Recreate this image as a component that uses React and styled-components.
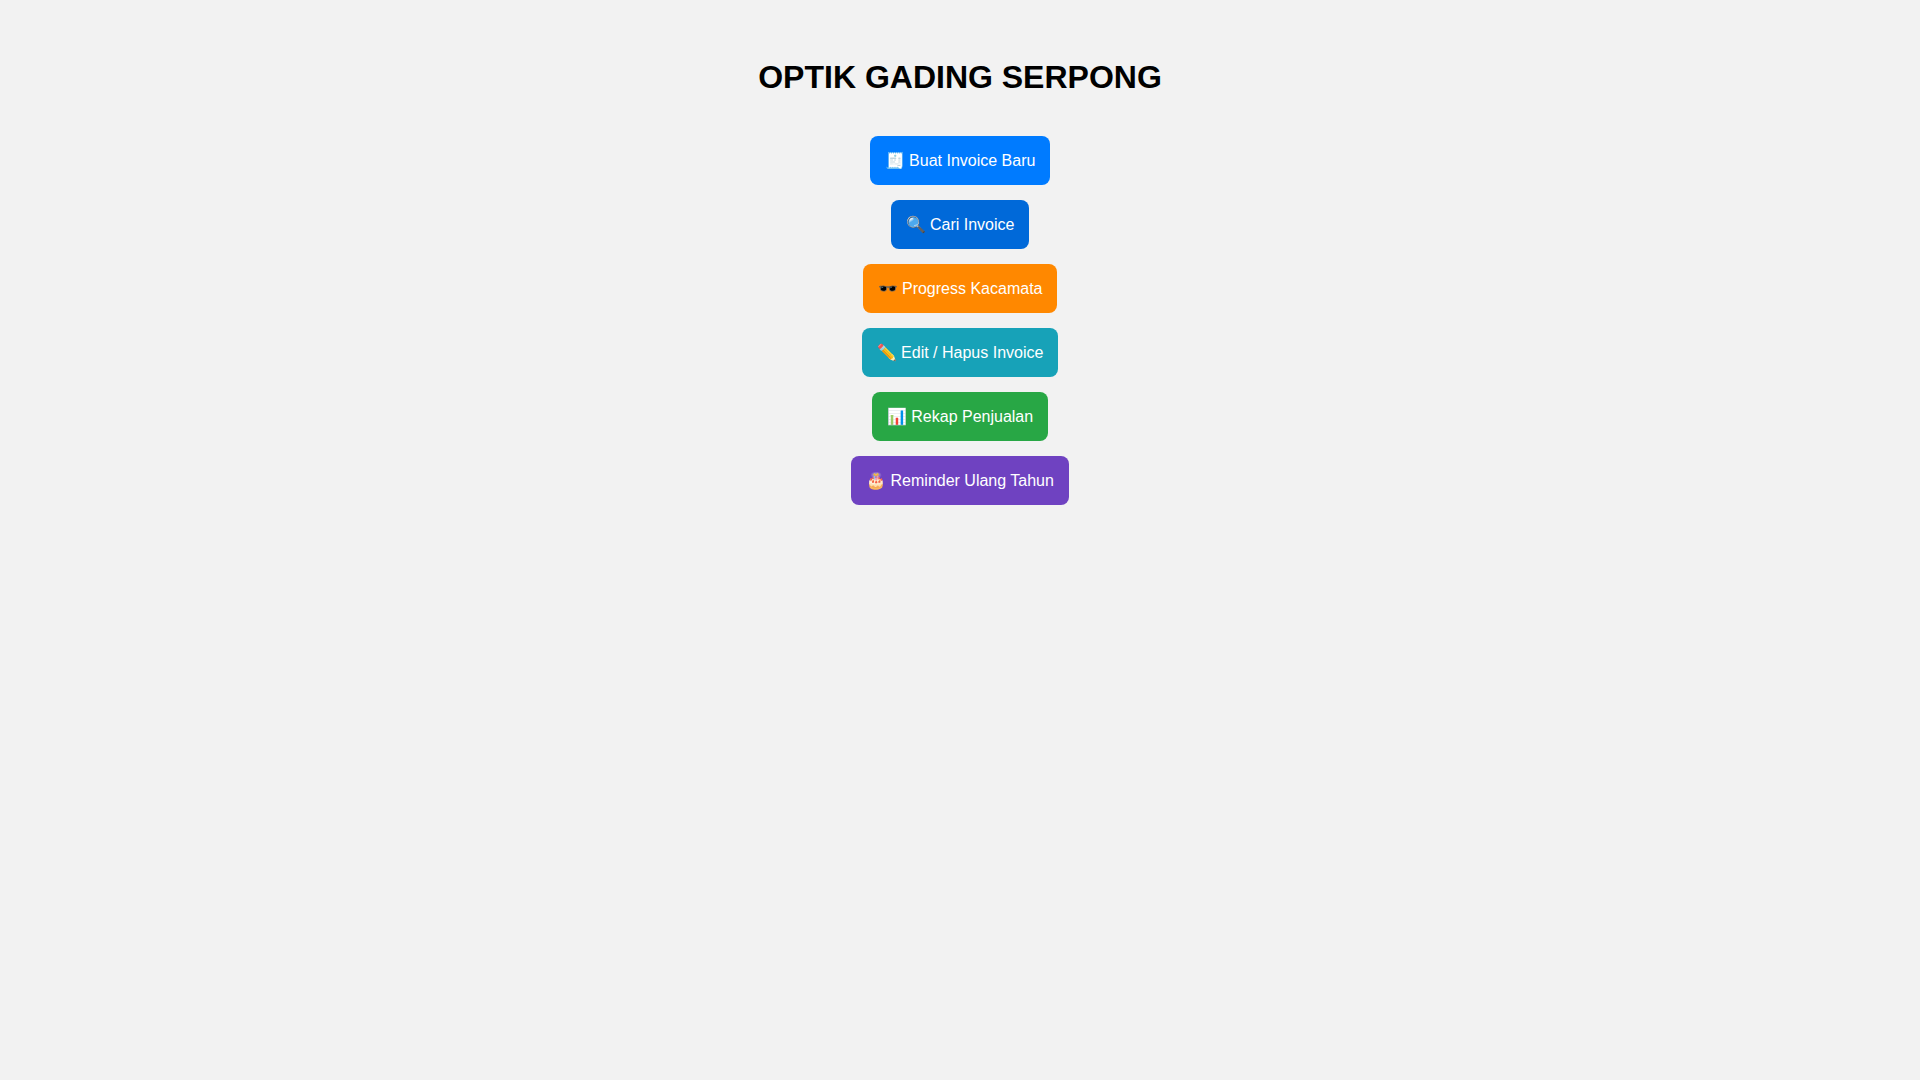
import React from 'react';
import styled, { createGlobalStyle } from 'styled-components';

const GlobalStyle = createGlobalStyle`
  body {
    margin: 0;
    background: #f2f2f2;
    font-family: "Liberation Sans", Arial, sans-serif;
  }
`;

const Page = styled.main`
  padding: 40px;
  text-align: center;
`;

const Title = styled.h1`
  margin: 18px 0 40px;
  font-size: 32px;
  line-height: 38px;
  color: #000;
`;

const Menu = styled.nav`
  display: flex;
  flex-direction: column;
  align-items: center;
  gap: 15px;
`;

const MenuButton = styled.button`
  padding: 15px;
  border: none;
  border-radius: 8px;
  background: ${(props) => props.$color};
  color: #fff;
  font-family: inherit;
  font-size: 16px;
  cursor: pointer;
`;

const menuItems = [
  { icon: '🧾', label: 'Buat Invoice Baru', color: '#007bff' },
  { icon: '🔍', label: 'Cari Invoice', color: '#0069d9' },
  { icon: '🕶️', label: 'Progress Kacamata', color: '#ff8800' },
  { icon: '✏️', label: 'Edit / Hapus Invoice', color: '#17a2b8' },
  { icon: '📊', label: 'Rekap Penjualan', color: '#28a745' },
  { icon: '🎂', label: 'Reminder Ulang Tahun', color: '#6f42c1' },
];

const App = () => {
  return (
    <Page>
      <GlobalStyle />
      <Title>OPTIK GADING SERPONG</Title>
      <Menu>
        {menuItems.map((item) => (
          <MenuButton key={item.label} type="button" $color={item.color}>
            {item.icon} {item.label}
          </MenuButton>
        ))}
      </Menu>
    </Page>
  );
};

export default App;
